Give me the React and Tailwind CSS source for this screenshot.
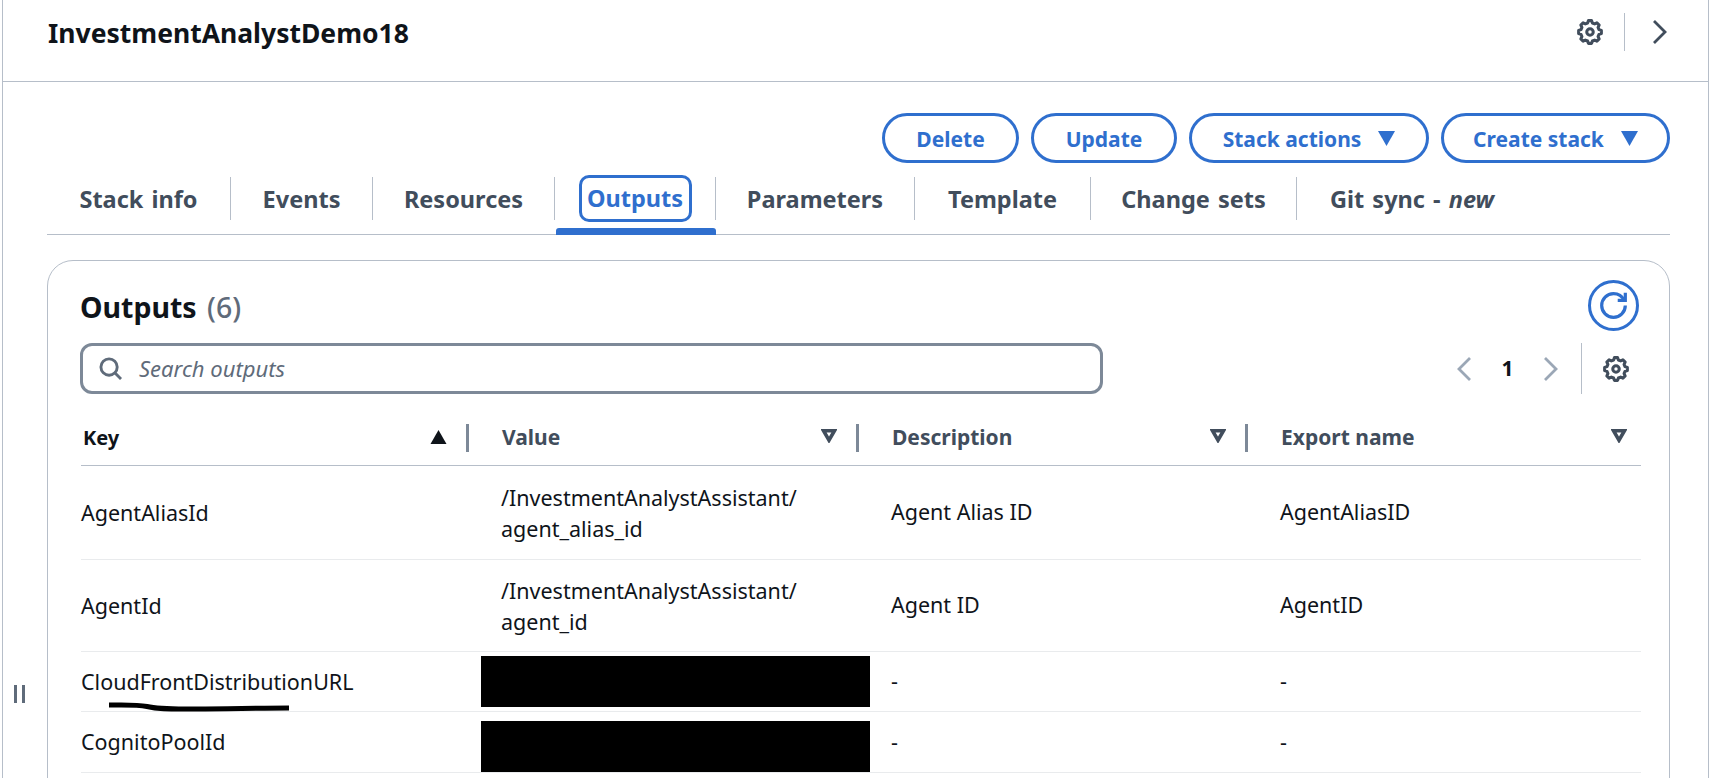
import React from "react";

const gearPath = (() => {
  const pts = [];
  for (let i = 0; i < 8; i++) {
    const a = (i * Math.PI) / 4 - Math.PI / 2;
    const d = Math.PI / 180;
    [[8.6, -15], [10.6, -8], [10.6, 8], [8.6, 15]].forEach(([r, o]) => {
      pts.push(`${(12 + r * Math.cos(a + o * d)).toFixed(2)} ${(12 + r * Math.sin(a + o * d)).toFixed(2)}`);
    });
  }
  return "M" + pts.join("L") + "Z";
})();

const Gear = ({ className }) => (
  <svg viewBox="0 0 24 24" className={className} fill="none" stroke="currentColor" strokeWidth="2.8" strokeLinejoin="round">
    <path d={gearPath} />
    <circle cx="12" cy="12" r="3" />
  </svg>
);

const Chevron = ({ className, dir = "right" }) => (
  <svg viewBox="0 0 16 24" className={className} fill="none" stroke="currentColor" strokeWidth="2.8">
    <path d={dir === "right" ? "M2 1l11 11L2 23" : "M14 1L3 12l11 11"} />
  </svg>
);

const Caret = () => (
  <svg viewBox="0 0 16 14" className="w-[17px] h-[15px] text-[#2f6fce]" fill="currentColor">
    <path d="M0 0h16L8 14z" />
  </svg>
);

const FilterTri = () => (
  <svg viewBox="0 0 16 14" className="w-[16px] h-[14px] mb-[4px] text-[#414d5c] shrink-0" fill="none" stroke="currentColor" strokeWidth="3.6" strokeLinejoin="miter">
    <path d="M2.6 1.8h10.8L8 11.2z" />
  </svg>
);

const SortUp = () => (
  <svg viewBox="0 0 16 14" className="w-[17px] h-[14px] mb-[2px] text-[#0f141a] shrink-0" fill="currentColor">
    <path d="M8 0l8 14H0z" />
  </svg>
);

function Btn({ w, children, caret }) {
  return (
    <button className={`${w} h-[50px] rounded-full border-[3px] border-[#2f6fce] text-[#2f6fce] font-bold text-[21px] flex items-center justify-center gap-[17px] bg-white`}>
      <span className="mt-[3px]">{children}</span>
      {caret && <Caret />}
    </button>
  );
}

const tabs = [
  ["Stack info", "w-[184px]"],
  ["Events", "w-[142px]"],
  ["Resources", "w-[182px]"],
  ["Outputs", "w-[161px]"],
  ["Parameters", "w-[199px]"],
  ["Template", "w-[176px]"],
  ["Change sets", "w-[206px]"],
];

function Tab({ label, w }) {
  const active = label === "Outputs";
  return (
    <div className={`${w} h-[43px] flex items-center justify-center border-r-[1.5px] border-[#b6bec9]`}>
      {active ? (
        <span className="h-[47px] w-[113px] rounded-[10px] border-[3px] border-[#2f6fce] text-[#2f6fce] flex items-center justify-center">
          <span className="mt-[1px]">{label}</span>
        </span>
      ) : (
        <span className="mt-[2px]">{label}</span>
      )}
    </div>
  );
}

function Head({ label, dark, sort, sep = true }) {
  return (
    <div className="flex items-center h-[28px]">
      <span className={`flex-1 font-bold ${dark ? "pl-[2px] text-[20px] text-[#0f141a]" : "pl-[1px] text-[21px] text-[#414d5c]"}`}>{label}</span>
      {sort ? <SortUp /> : <FilterTri />}
      {sep && <span className="ml-[19px] mr-[32px] w-[3px] h-[28px] bg-[#7d8998]" />}
      {!sep && <span className="w-[14px]" />}
    </div>
  );
}

const cols = "grid grid-cols-[420px_390px_389px_1fr]";

function Row({ h, k, value, desc, exp, masked, end }) {
  return (
    <div className={`${cols} ${h} items-center border-b-[1.5px] border-[#e9ebed] text-[21.5px] text-[#0f141a]`}>
      <span className={end ? "" : "mt-[2px]"}>{k}</span>
      {masked ? (
        <span className={`ml-[-20px] w-[389px] h-[51px] bg-black ${end ? "self-end" : ""}`} />
      ) : (
        <span className="leading-[31px]">
          /InvestmentAnalystAssistant/
          <br />
          {value}
        </span>
      )}
      <span>{desc}</span>
      <span>{exp}</span>
    </div>
  );
}

export default function App() {
  return (
    <div className="w-[1712px] h-[778px] overflow-hidden bg-white relative font-['Noto_Sans',sans-serif]">
      <div className="ml-[2px] mr-[3px] h-[778px] border-x-[1.5px] border-[#b6bec9]">
        <header className="h-[82px] border-b-[1.5px] border-[#b6bec9] flex items-center pl-[45px] pr-[40px] pb-[18px]">
          <h1 className="flex-1 mt-[4px] text-[26.5px] font-bold text-[#0f141a]">InvestmentAnalystDemo18</h1>
          <Gear className="w-[26px] h-[26px] text-[#414d5c]" />
          <span className="w-[1.5px] h-[38px] bg-[#b6bec9] ml-[21px] mr-[27px]" />
          <Chevron className="w-[16px] h-[26px] text-[#414d5c]" />
        </header>

        <div className="pl-[44px] pr-[38px]">
          <div className="flex justify-end gap-[12px] pt-[31px]">
            <Btn w="w-[137px]">Delete</Btn>
            <Btn w="w-[146px]">Update</Btn>
            <Btn w="w-[240px]" caret>Stack actions</Btn>
            <Btn w="w-[229px]" caret>Create stack</Btn>
          </div>

          <div className="h-[72px] border-b-[1.5px] border-[#b6bec9] flex pt-[14px] text-[23.5px] [word-spacing:2px] font-bold text-[#414d5c] relative">
            {tabs.map(([l, w]) => <Tab key={l} label={l} w={w} />)}
            <div className="h-[43px] flex items-center pl-[33px]">
              <span className="mt-[2px]">Git sync - <i>new</i></span>
            </div>
            <span className="absolute left-[509px] w-[160px] bottom-[-1px] h-[7px] rounded-t-[3px] bg-[#2f6fce]" />
          </div>

          <section className="mt-[25px] rounded-t-[26px] border-[1.5px] border-[#b6bec9] pl-[33px] pr-[28px] h-[600px]">
            <div className="flex items-center justify-between pt-[8px] pr-[2px] h-[81px]">
              <h2 className="mt-[3px] ml-[-1px] text-[28.5px] [word-spacing:3px] font-bold text-[#0f141a]">
                Outputs <span className="font-medium text-[#5f6b7a]">(6)</span>
              </h2>
              <span className="w-[51px] h-[51px] rounded-full border-[3px] border-[#2f6fce] text-[#2f6fce] flex items-center justify-center">
                <svg viewBox="0 0 16 16" className="w-[27px] h-[27px]" fill="none" stroke="currentColor" strokeWidth="1.9">
                  <path d="M15 8c0 3.87-3.13 7-7 7s-7-3.13-7-7 3.13-7 7-7c2.79 0 5.2 1.63 6.33 4" />
                  <path d="M15 .5V5h-4.5" />
                </svg>
              </span>
            </div>

            <div className="flex items-center ml-[-1px] pr-[2px] mt-[1px] h-[51px]">
              <div className="w-[1023px] h-[51px] rounded-[12px] border-[3px] border-[#7d8998] flex items-center pl-[16px]">
                <svg viewBox="0 0 24 24" className="w-[23px] h-[23px] text-[#5f6b7a]" fill="none" stroke="currentColor" strokeWidth="3">
                  <circle cx="10.5" cy="10.5" r="8.5" />
                  <path d="M16.5 16.5l6.5 6.5" />
                </svg>
                <span className="ml-[17px] italic text-[22px] text-[#5f6b7a]">Search outputs</span>
              </div>
              <div className="flex-1 flex items-center justify-end h-full">
                <Chevron dir="left" className="w-[16px] h-[26px] text-[#9ba7b6]" />
                <span className="mx-[29px] font-bold text-[21px] text-[#0f141a]">1</span>
                <Chevron className="w-[16px] h-[26px] text-[#9ba7b6]" />
                <span className="ml-[22px] w-[1.5px] h-[51px] bg-[#b6bec9]" />
                <Gear className="ml-[21px] mr-[10px] w-[26px] h-[26px] text-[#414d5c]" />
              </div>
            </div>

            <div className={`${cols} mt-[30px] pb-[13px] border-b-[1.5px] border-[#b6bec9]`}>
              <Head label="Key" dark sort />
              <Head label="Value" />
              <Head label="Description" />
              <Head label="Export name" sep={false} />
            </div>

            <Row h="h-[94px]" k="AgentAliasId" value="agent_alias_id" desc="Agent Alias ID" exp="AgentAliasID" />
            <Row h="h-[92px]" k="AgentId" value="agent_id" desc="Agent ID" exp="AgentID" />
            <Row h="h-[60px]" k="CloudFrontDistributionURL" masked desc="-" exp="-" />
            <Row h="h-[61px]" k="CognitoPoolId" masked end desc="-" exp="-" />
          </section>
        </div>
      </div>

      <div className="absolute left-[14px] top-[685px] flex gap-[5px]">
        <span className="w-[3px] h-[18px] bg-[#5f6b7a]" />
        <span className="w-[3px] h-[18px] bg-[#5f6b7a]" />
      </div>

      <svg className="absolute left-[108px] top-[701px] w-[184px] h-[11px]" viewBox="0 0 184 11" fill="none" stroke="#000" strokeWidth="5">
        <path d="M1 4c20 0 28-.5 38 1.5 12 3 24 2.5 50 2.5 30 0 60-1 92-1" />
      </svg>
    </div>
  );
}
